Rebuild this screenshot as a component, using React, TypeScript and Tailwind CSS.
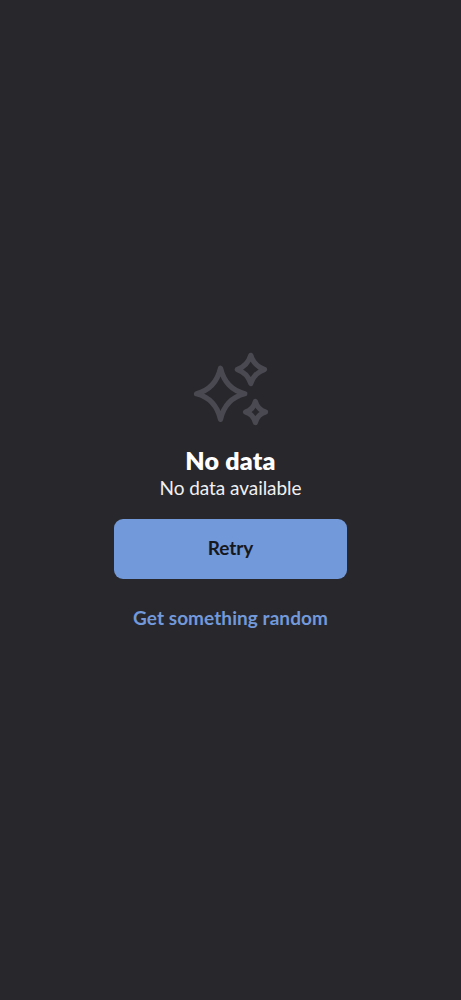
function SparklesIcon() {
  return (
    <svg
      className="h-[85px] w-[91px] shrink-0"
      viewBox="0 0 91 85"
      fill="none"
      stroke="#4a4951"
      strokeWidth="5.2"
      strokeLinecap="round"
      strokeLinejoin="round"
      aria-hidden="true"
    >
      <path d="M35.5 23.2C38.5 36 46.5 45.5 59.8 48.8C46.5 52.1 38.5 61.5 35.5 74.4C32.5 61.5 24.5 52.1 11.5 48.8C24.5 45.5 32.5 36 35.5 23.2Z" />
      <path d="M65.8 10.3C68 17.5 72 22 79.5 24.5C72 27 68 31.5 65.8 38.5C63.6 31.5 59.5 27 52.3 24.5C59.5 22 63.6 17.5 65.8 10.3Z" />
      <path d="M70.4 56.5C71.9 62 75 65.4 80.5 67C75 68.6 71.9 72 70.4 77.5C68.9 72 66 68.6 60.5 67C66 65.4 68.9 62 70.4 56.5Z" />
    </svg>
  );
}

export default function App() {
  return (
    <main className="flex min-h-[1000px] w-full flex-col items-center bg-[#28272c] pt-[345px] font-['Lato',sans-serif]">
      <SparklesIcon />
      <h1 className="mt-[14px] text-[25px] leading-8 font-extrabold tracking-[0.2px] whitespace-nowrap text-white">
        No data
      </h1>
      <p className="text-[19px] leading-6 tracking-[-0.05px] whitespace-nowrap text-[#f0f0f2]">
        No data available
      </p>
      <button className="mt-[19px] h-[60px] w-[232.5px] rounded-[9px] bg-[#7299da] pb-px text-[19px] font-bold tracking-[-0.1px] text-[#17181c]">
        Retry
      </button>
      <button className="mt-[27px] text-[19px] leading-6 font-bold tracking-[0.07px] whitespace-nowrap text-[#7299da]">
        Get something random
      </button>
    </main>
  );
}
